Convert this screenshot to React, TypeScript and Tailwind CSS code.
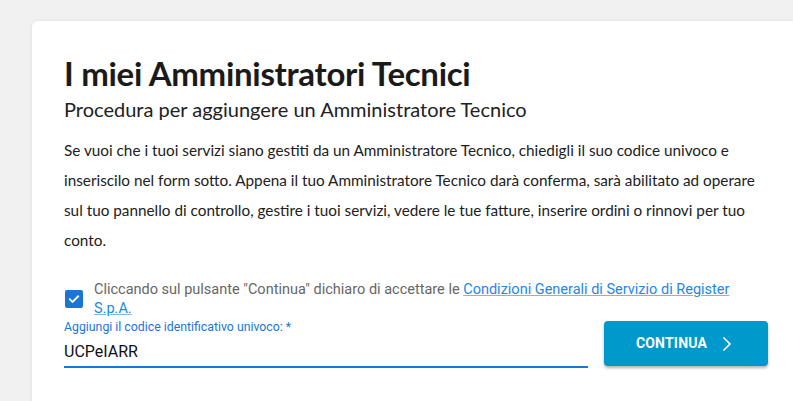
import { ChevronRight } from "lucide-react"

export default function App() {
    return (
        <div className="min-h-screen w-full bg-[#f1f1f1] pt-[21px] pl-[32px] overflow-hidden">
            <div className="bg-white rounded-tl-[6px] shadow-[0_0_4px_rgba(0,0,0,0.08)] pl-[32px] pr-[25px] pt-[32px] pb-[40px] h-[400px]">
                {/* Header */}
                <h1 className="font-['Lato'] font-bold text-[33px] leading-[40px] text-[#1a1a1a] tracking-[-0.3px]">
                    I miei Amministratori Tecnici
                </h1>
                <h2 className="font-['Lato'] text-[20px] leading-[28px] text-[#212121] mt-[2px]">
                    Procedura per aggiungere un Amministratore Tecnico
                </h2>

                <p className="font-['Lato'] text-[15.3px] leading-[30px] text-[#212121] mt-[12px] w-[700px]">
                    Se vuoi che i tuoi servizi siano gestiti da un Amministratore Tecnico, chiedigli il suo codice univoco e inseriscilo nel form sotto. Appena il tuo Amministratore Tecnico darà conferma, sarà abilitato ad operare sul tuo pannello di controllo, gestire i tuoi servizi, vedere le tue fatture, inserire ordini o rinnovi per tuo conto.
                </p>

                {/* Terms checkbox */}
                <div className="flex items-center gap-[11px] mt-[25px] font-['Roboto'] text-[14.5px] leading-[19px]">
                    <div className="w-[18px] h-[18px] ml-[1px] shrink-0 rounded-[2px] bg-[#1976d2] flex items-center justify-center">
                        <svg className="w-[14px] h-[14px]" viewBox="0 0 24 24" fill="none" stroke="white" strokeWidth={3.2} strokeLinecap="square">
                            <path d="M5 12.5l4.5 4.5L19 7.5" />
                        </svg>
                    </div>
                    <div className="text-[#666666] w-[645px]">
                        <p>
                            Cliccando sul pulsante "Continua" dichiaro di accettare le{" "}
                            <a href="#" className="text-[#1e88e5] underline decoration-[#1e88e5]/60">
                                Condizioni Generali di Servizio di Register
                            </a>
                        </p>
                        <a href="#" className="block text-[#1e88e5] underline decoration-[#1e88e5]/60">
                            S.p.A.
                        </a>
                    </div>
                </div>

                {/* Code input + button */}
                <div className="flex items-end gap-[16px] mt-[1px] font-['Roboto']">
                    <div className="w-[524px]">
                        <label className="block text-[12.3px] leading-[16px] text-[#1976d2]">
                            Aggiungi il codice identificativo univoco: *
                        </label>
                        <div className="border-b-2 border-[#1976d2] pt-[7px] pb-[4px] text-[16px] leading-[20px] text-[#111111]">
                            UCPeIARR
                        </div>
                    </div>
                    <button className="w-[164px] h-[45px] mb-[2px] pl-[3px] rounded-[4px] bg-[#0099cc] text-white font-bold text-[14px] tracking-[0.2px] flex items-center justify-center gap-[8px] shadow-[0_2px_3px_rgba(0,0,0,0.3)]">
                        CONTINUA
                        <ChevronRight className="w-[24px] h-[24px]" strokeWidth={1.75} />
                    </button>
                </div>
            </div>
        </div>
    )
}
